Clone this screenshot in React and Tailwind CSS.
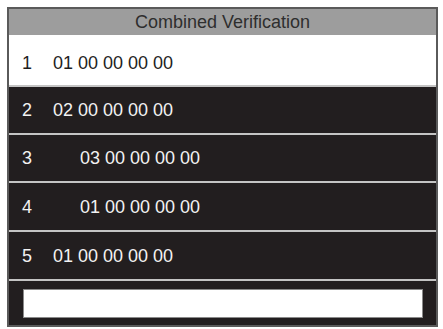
const rows = [
  { n: '1', code: '01 00 00 00 00', indent: false, active: true, h: 'h-[50px]' },
  { n: '2', code: '02 00 00 00 00', indent: false, h: 'h-[48px]' },
  { n: '3', code: '03 00 00 00 00', indent: true, h: 'h-[48px]' },
  { n: '4', code: '01 00 00 00 00', indent: true, h: 'h-[49px]' },
  { n: '5', code: '01 00 00 00 00', indent: false, h: 'h-[49px]' },
];

export default function App() {
  return (
    <div className="w-[443px] h-[329px] bg-white pl-[7px] pt-[7px] overflow-hidden font-['Liberation_Sans',Arial,sans-serif]">
      <div className="w-[431px] h-[320px] border-2 border-[#5a5a5a] bg-[#221e1f] flex flex-col">
        {/* title */}
        <div className="h-[26px] shrink-0 bg-[#9d9d9d] flex items-center justify-center text-[18px] text-[#2e2e2e] leading-none">
          Combined Verification
        </div>

        {rows.map((r) => (
          <div
            key={r.n}
            className={`${r.h} shrink-0 flex items-center pl-[13px] text-[18px] leading-none ${
              r.active
                ? 'bg-white text-[#1e1e1e] pt-[6px]'
                : 'border-t-2 border-[#c4c4c4] text-[#f2f2f2]'
            }`}
          >
            <span className="w-[31px]">{r.n}</span>
            <span className={r.indent ? 'pl-[27px]' : ''}>{r.code}</span>
          </div>
        ))}

        {/* input area */}
        <div className="flex-1 border-t-2 border-[#c4c4c4] pt-[8px] pl-[14px] pr-[13px]">
          <div className="h-[29px] bg-white border border-[#8a8a8a]" />
        </div>
      </div>
    </div>
  );
}
